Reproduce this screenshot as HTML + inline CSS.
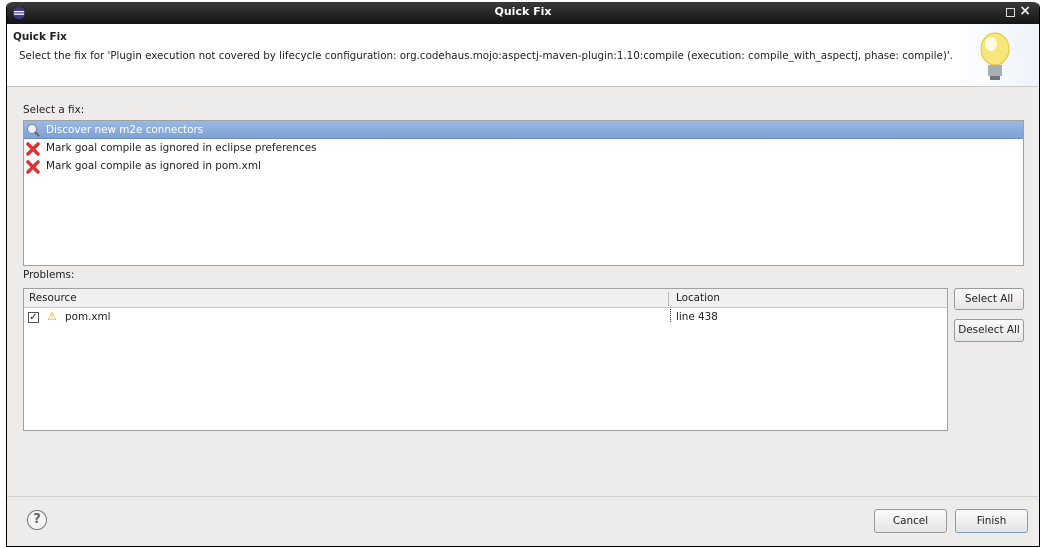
<!DOCTYPE html>
<html><head><style>
*{box-sizing:border-box;margin:0;padding:0}
body{width:1042px;height:548px;background:#fff;font-family:"DejaVu Sans","Liberation Sans",sans-serif;font-size:10.4px;color:#222;position:relative;overflow:hidden}
.a{position:absolute}
.btn{position:absolute;border:1px solid #9a9a9a;border-radius:3px;background:linear-gradient(#fbfbfa,#e6e5e3);text-align:center;font-size:10.4px;color:#222}
</style></head><body>
<div class="a" style="left:6px;top:2px;width:1034px;height:545px;border:1px solid #000;border-top:none;background:#edeceb;border-radius:6px 6px 0 0;overflow:hidden">
 <div class="a" style="left:0;top:0;width:100%;height:22px;background:linear-gradient(#3a3a3a,#141414);border-radius:6px 6px 0 0"></div>
 <div class="a" style="left:0;top:3px;width:100%;text-align:center;color:#fff;font-weight:bold;font-size:11px">Quick Fix</div>
 <svg class="a" style="left:5px;top:4px" width="14" height="14"><circle cx="7" cy="7" r="6" fill="#3b3b8a"/><rect x="2" y="5" width="10" height="1.3" fill="#fff"/><rect x="2" y="7.5" width="10" height="1.3" fill="#fff"/></svg>
 <div class="a" style="right:24px;top:6px;width:9px;height:9px;border:1px solid #ddd"></div>
 <div class="a" style="right:8px;top:1px;color:#eee;font-weight:bold;font-size:14px">×</div>
 <div class="a" style="left:0;top:22px;width:100%;height:63px;background:linear-gradient(90deg,#fff 92%,#eef3fa);border-bottom:1px solid #c8c8c8"></div>
 <div class="a" style="left:6px;top:29px;font-weight:bold;font-size:10.4px">Quick Fix</div>
 <div class="a" style="left:12px;top:48px;font-size:10.3px;white-space:nowrap">Select the fix for 'Plugin execution not covered by lifecycle configuration: org.codehaus.mojo:aspectj-maven-plugin:1.10:compile (execution: compile_with_aspectj, phase: compile)'.</div>
 <svg class="a" style="left:968px;top:30px" width="40" height="52"><ellipse cx="20" cy="17" rx="14" ry="16" fill="#f7e77a" stroke="#e0c23a"/><ellipse cx="16" cy="12" rx="6" ry="7" fill="#fffbe0"/><rect x="13" y="33" width="14" height="11" fill="#a8aeb5"/><rect x="15" y="44" width="10" height="4" fill="#6d737a"/></svg>
 <div class="a" style="left:16px;top:102px">Select a fix:</div>
 <div class="a" style="left:16px;top:118px;width:1001px;height:146px;background:#fff;border:1px solid #a0a0a0"></div>
 <div class="a" style="left:17px;top:119px;width:999px;height:18px;background:linear-gradient(#9ab8e2,#7ea2d6);border-bottom:1px solid #6a8cc0"></div>
 <svg class="a" style="left:19px;top:121px" width="14" height="14"><circle cx="6" cy="6" r="4.5" fill="#eef" stroke="#888"/><line x1="9" y1="9" x2="13" y2="13" stroke="#666" stroke-width="2"/></svg>
 <div class="a" style="left:39px;top:122px;color:#fff">Discover new m2e connectors</div>
 <svg class="a" style="left:19px;top:140px" width="14" height="14"><path d="M2 2L12 12M12 2L2 12" stroke="#d33" stroke-width="3.5" stroke-linecap="round"/></svg>
 <div class="a" style="left:39px;top:140px">Mark goal compile as ignored in eclipse preferences</div>
 <svg class="a" style="left:19px;top:158px" width="14" height="14"><path d="M2 2L12 12M12 2L2 12" stroke="#d33" stroke-width="3.5" stroke-linecap="round"/></svg>
 <div class="a" style="left:39px;top:158px">Mark goal compile as ignored in pom.xml</div>
 <div class="a" style="left:16px;top:267px">Problems:</div>
 <div class="a" style="left:16px;top:286px;width:925px;height:143px;background:#fff;border:1px solid #a0a0a0"></div>
 <div class="a" style="left:17px;top:287px;width:923px;height:19px;background:#f1f0ef;border-bottom:1px solid #c8c8c8"></div>
 <div class="a" style="left:661px;top:290px;width:1px;height:14px;background:#bbb"></div>
 <div class="a" style="left:22px;top:290px">Resource</div>
 <div class="a" style="left:669px;top:290px">Location</div>
 <div class="a" style="left:21px;top:310px;width:11px;height:11px;border:1px solid #555;background:#fff;font-size:10px;line-height:9px;text-align:center">✓</div>
 <div class="a" style="left:40px;top:308px;color:#e8a000;font-size:11px">⚠</div>
 <div class="a" style="left:58px;top:309px">pom.xml</div>
 <div class="a" style="left:663px;top:307px;height:13px;border-left:1px dotted #333"></div>
 <div class="a" style="left:669px;top:309px">line 438</div>
 <div class="btn" style="left:947px;top:286px;width:70px;height:22px;line-height:20px">Select All</div>
 <div class="btn" style="left:947px;top:317px;width:70px;height:23px;line-height:21px">Deselect All</div>
 <div class="a" style="left:0;top:494px;width:100%;height:1px;background:#d0d0d0"></div>
 <div class="a" style="left:20px;top:508px;width:20px;height:20px;border:1px solid #777;border-radius:50%;background:#f5f5f5;text-align:center;font-weight:bold;font-size:13px;line-height:18px;color:#666">?</div>
 <div class="btn" style="left:867px;top:507px;width:73px;height:24px;line-height:22px">Cancel</div>
 <div class="btn" style="left:948px;top:507px;width:73px;height:24px;line-height:22px;border-color:#7a9cc8">Finish</div>
</div>
</body></html>
